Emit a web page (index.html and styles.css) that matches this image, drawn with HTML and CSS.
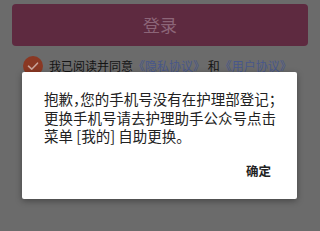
FILE: index.html
```html
<!DOCTYPE html>
<html lang="zh-CN">
<head>
<meta charset="utf-8">
<title>登录</title>
<link rel="stylesheet" href="styles.css">
</head>
<body>
<div class="page">
  <div class="login-btn">登录</div>
  <div class="agree">
    <span class="check">
      <svg width="20" height="20" viewBox="0 0 20 20"><path d="M5.5 10.2 L8.7 13.2 L14.5 7.2" fill="none" stroke="#c9a49a" stroke-width="1.6" stroke-linecap="round" stroke-linejoin="round"/></svg>
    </span>
    <span class="agree-text">我已阅读并同意<span class="link">《隐私协议》</span> 和<span class="link">《用户协议》</span></span>
  </div>
</div>
<div class="dialog">
  <div class="msg">
    <div class="line">抱歉<span class="half">，</span>您的手机号没有在护理部登记；</div>
    <div class="line">更换手机号请去护理助手公众号点击</div>
    <div class="line">菜单 [我的] 自助更换。</div>
  </div>
  <div class="actions"><span class="ok">确定</span></div>
</div>
</body>
</html>
```
FILE: styles.css
```css
html, body {
  margin: 0;
  padding: 0;
}
body {
  width: 320px;
  height: 231px;
  background: #6b6b6b;
  font-family: "Noto Sans CJK SC", "Noto Sans", sans-serif;
  overflow: hidden;
  position: relative;
}
.page {
  padding: 4px 12px 0;
}
.login-btn {
  height: 42px;
  border-radius: 4px;
  background: #5e2a40;
  color: #8c6578;
  font-size: 17px;
  line-height: 42px;
  text-align: center;
}
.agree {
  display: flex;
  align-items: center;
  gap: 6px;
  margin-top: 10px;
  padding-left: 11px;
}
.check {
  width: 20px;
  height: 20px;
  border-radius: 50%;
  background: #8a3823;
  display: flex;
  flex: none;
}
.agree-text {
  font-size: 12px;
  color: #141414;
  white-space: nowrap;
  line-height: 20px;
}
.link {
  color: #48578a;
}
.dialog {
  position: absolute;
  left: 22px;
  top: 72px;
  width: 275px;
  height: 127px;
  background: #ffffff;
  border-radius: 2px;
  box-shadow: 0 2px 6px rgba(0, 0, 0, 0.35);
  box-sizing: border-box;
  padding: 18px 4px 0 22px;
  display: flex;
  flex-direction: column;
}
.msg {
  font-size: 14.5px;
  color: #222222;
  white-space: nowrap;
}
.line {
  height: 18.7px;
  line-height: 18.7px;
}
.half {
  font-feature-settings: "halt";
}
.actions {
  display: flex;
  justify-content: flex-end;
  padding-right: 22px;
  margin-top: 17px;
}
.ok {
  font-size: 12.5px;
  font-weight: 700;
  color: #222222;
  line-height: 16px;
}
```
